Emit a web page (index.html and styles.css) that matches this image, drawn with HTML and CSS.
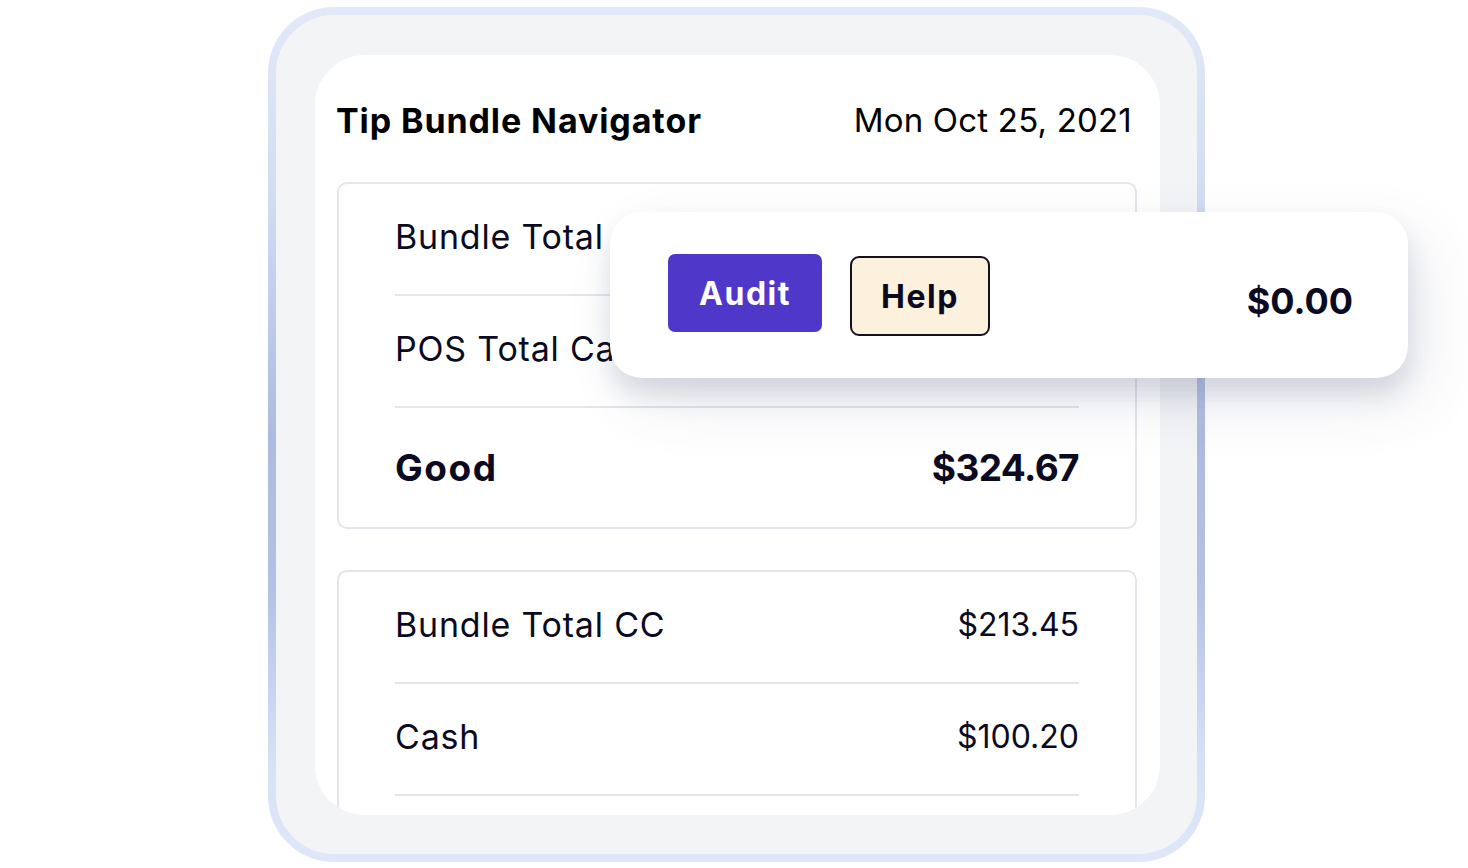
FILE: index.html
```html
<!doctype html>
<html lang="en">
<head>
  <meta charset="utf-8">
  <title>Tip Bundle Navigator</title>
  <link rel="stylesheet" href="styles.css">
</head>
<body>
  <div class="stage">
    <div class="frame">
      <div class="frameInner">
        <div class="card">
          <div class="cardHeader">
            <span class="title">Tip Bundle Navigator</span>
            <span class="date">Mon Oct 25, 2021</span>
          </div>

          <div class="box">
            <div class="row"><span class="label">Bundle Total</span><span class="amount"></span></div>
            <div class="row"><span class="label">POS Total Cash</span><span class="amount"></span></div>
            <div class="row total"><span class="label">Good</span><span class="amount">$324.67</span></div>
          </div>

          <div class="box second">
            <div class="row"><span class="label">Bundle Total CC</span><span class="amount">$213.45</span></div>
            <div class="row"><span class="label">Cash</span><span class="amount">$100.20</span></div>
          </div>
        </div>
      </div>
    </div>

    <div class="popup">
      <button class="btn audit">Audit</button>
      <button class="btn help">Help</button>
      <span class="popupValue">$0.00</span>
    </div>
  </div>
</body>
</html>
```

FILE: styles.css
```css
:root{
  --ink:#0b0a20;
  --line:#e4e6ec;
  --purple:#4f38c9;
}
body{
  margin:0;
  background:#ffffff;
  font-family:"Inter","Noto Sans",sans-serif;
  color:var(--ink);
}
.stage{
  position:relative;
  width:1468px;
  height:868px;
  overflow:hidden;
}
.frame{
  margin:7px 0 0 268px;
  width:937px;
  height:855px;
  box-sizing:border-box;
  padding:8px;
  border-radius:66px;
  background:linear-gradient(180deg,#e2e9f8 0%,#d2dcf3 22%,#aebbe0 50%,#b4c1e4 68%,#d6e1f7 88%,#dfe8f9 100%);
}
.frameInner{
  height:100%;
  box-sizing:border-box;
  padding:40px 37px 0 39px;
  border-radius:58px;
  background:#f3f4f6;
}
.card{
  height:760px;
  box-sizing:border-box;
  padding:0 23px 0 22px;
  border-radius:50px;
  background:#ffffff;
  overflow:hidden;
}
.cardHeader{
  display:flex;
  justify-content:space-between;
  align-items:center;
  height:50px;
  padding:40px 5px 0 0;
  margin:0 0 37px -1px;
}
.title{
  font-size:34px;
  font-weight:700;
  color:#000;
  letter-spacing:0.9px;
}
.date{
  font-size:33px;
  font-weight:400;
  color:#000;
  letter-spacing:0.2px;
}
.box{
  border:2px solid var(--line);
  border-radius:10px;
}
.box.second{
  margin-top:41px;
  height:300px;
}
.row{
  display:flex;
  justify-content:space-between;
  align-items:center;
  height:112px;
  box-sizing:border-box;
  margin:0 56px;
  padding-bottom:6px;
  border-bottom:2px solid var(--line);
  font-size:32px;
}
.row .label{
  font-size:34px;
  letter-spacing:0.8px;
}
.row.total{
  height:119px;
  border-bottom:none;
  padding-bottom:0;
  font-weight:700;
}
.row.total .label{
  font-size:37px;
  letter-spacing:1.5px;
}
.row.total .amount{
  font-size:37px;
  letter-spacing:-0.6px;
}
.popup{
  position:absolute;
  left:610px;
  top:212px;
  width:798px;
  height:166px;
  box-sizing:border-box;
  padding:0 55px 0 58px;
  display:flex;
  align-items:center;
  border-radius:32px;
  background:#fff;
  box-shadow:0 16px 24px rgba(70,80,120,0.16),16px 24px 60px rgba(70,80,120,0.12);
}
.btn{
  font-family:inherit;
  font-weight:700;
  font-size:32px;
  letter-spacing:1.5px;
  border-radius:7px;
  cursor:pointer;
}
.audit{
  width:154px;
  height:78px;
  margin-top:-4px;
  border:none;
  background:var(--purple);
  color:#fff;
}
.help{
  width:140px;
  height:80px;
  margin-left:28px;
  margin-top:2px;
  border:2px solid #111122;
  border-radius:9px;
  background:#fcf1dc;
  color:var(--ink);
}
.popupValue{
  margin-left:auto;
  margin-top:12px;
  font-size:36px;
  font-weight:700;
}
```
